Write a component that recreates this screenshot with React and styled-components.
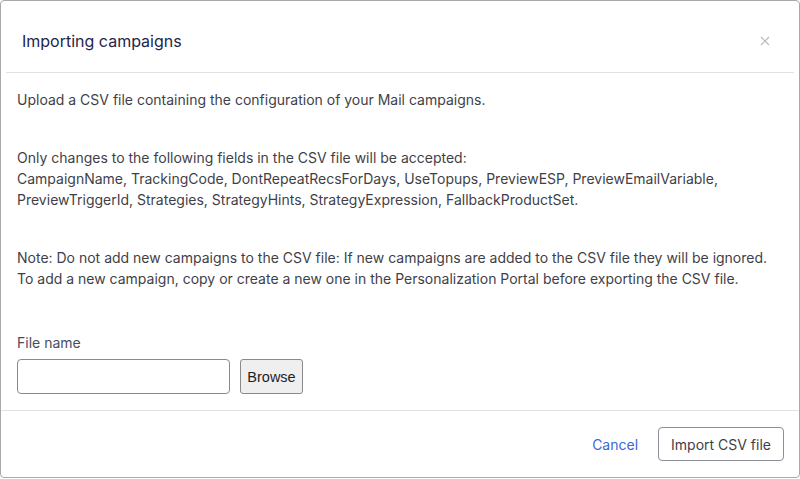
import React from 'react';
import styled, { createGlobalStyle } from 'styled-components';

const GlobalStyle = createGlobalStyle`
  *, *::before, *::after {
    box-sizing: border-box;
  }
  html, body {
    margin: 0;
    padding: 0;
    background: #ffffff;
  }
  body {
    font-family: Inter, "Noto Sans", sans-serif;
  }
`;

const Modal = styled.div`
  width: 800px;
  height: 478px;
  border: 1px solid #a9a9a9;
  border-radius: 4px;
  background: #ffffff;
  display: flex;
  flex-direction: column;
`;

const Header = styled.div`
  height: 72px;
  margin: 0 5px;
  padding: 8px 16px 0;
  display: flex;
  align-items: center;
  justify-content: space-between;
  border-bottom: 1px solid #e2e2e6;
`;

const Title = styled.h2`
  margin: 0;
  font-size: 16px;
  font-weight: 400;
  line-height: 24px;
  color: #24244a;
`;

const CloseButton = styled.button`
  border: none;
  background: none;
  padding: 0;
  margin-right: 6px;
  width: 14px;
  height: 14px;
  display: flex;
  align-items: center;
  justify-content: center;
  color: #b9b9c0;
  cursor: pointer;
`;

const Body = styled.div`
  flex: 1;
  padding: 16px;
  color: #3f3f48;
  font-size: 14px;
  line-height: 21px;
`;

const Paragraph = styled.p`
  margin: 0 0 ${({ $last }) => ($last ? '0' : '37px')};
`;

const Label = styled.label`
  display: block;
  margin-top: 43px;
  margin-bottom: 6px;
  color: #4b4b60;
  font-size: 14px;
  line-height: 21px;
`;

const FileRow = styled.div`
  display: flex;
  align-items: center;
  gap: 10px;
`;

const FileInput = styled.input`
  width: 213px;
  height: 35px;
  border: 1px solid #8a8a8a;
  border-radius: 4px;
  padding: 0 8px;
  font-family: inherit;
  font-size: 14px;
`;

const BrowseButton = styled.button`
  width: 63px;
  height: 35px;
  padding: 0;
  border: 1px solid #8a8a8a;
  border-radius: 3px;
  background: #efefef;
  color: #1e1e1e;
  font-family: "Liberation Sans", Arial, sans-serif;
  font-size: 14.5px;
`;

const Footer = styled.div`
  height: 67px;
  border-top: 1px solid #e2e2e6;
  padding: 0 15px;
  display: flex;
  align-items: center;
  justify-content: flex-end;
  gap: 20px;
`;

const LinkButton = styled.button`
  border: none;
  background: none;
  padding: 0;
  font-family: inherit;
  font-size: 14px;
  color: #3c68d4;
  cursor: pointer;
`;

const OutlineButton = styled.button`
  height: 34px;
  padding: 0 12px;
  border: 1px solid #8e8e96;
  border-radius: 4px;
  background: #ffffff;
  font-family: inherit;
  font-size: 14px;
  color: #3f3f48;
  cursor: pointer;
`;

const CloseIcon = () => (
  <svg width="10" height="10" viewBox="0 0 10 10" fill="none" stroke="currentColor" strokeWidth="1.2">
    <path d="M1 1 L9 9 M9 1 L1 9" />
  </svg>
);

const App = () => (
  <>
    <GlobalStyle />
    <Modal>
      <Header>
        <Title>Importing campaigns</Title>
        <CloseButton aria-label="Close"><CloseIcon /></CloseButton>
      </Header>
      <Body>
        <Paragraph>Upload a CSV file containing the configuration of your Mail campaigns.</Paragraph>
        <Paragraph>
          Only changes to the following fields in the CSV file will be accepted:<br />
          CampaignName, TrackingCode, DontRepeatRecsForDays, UseTopups, PreviewESP, PreviewEmailVariable,
          PreviewTriggerId, Strategies, StrategyHints, StrategyExpression, FallbackProductSet.
        </Paragraph>
        <Paragraph $last>
          Note: Do not add new campaigns to the CSV file: If new campaigns are added to the CSV file they will be ignored.<br />
          To add a new campaign, copy or create a new one in the Personalization Portal before exporting the CSV file.
        </Paragraph>
        <Label htmlFor="file-name">File name</Label>
        <FileRow>
          <FileInput id="file-name" type="text" />
          <BrowseButton>Browse</BrowseButton>
        </FileRow>
      </Body>
      <Footer>
        <LinkButton>Cancel</LinkButton>
        <OutlineButton>Import CSV file</OutlineButton>
      </Footer>
    </Modal>
  </>
);

export default App;
